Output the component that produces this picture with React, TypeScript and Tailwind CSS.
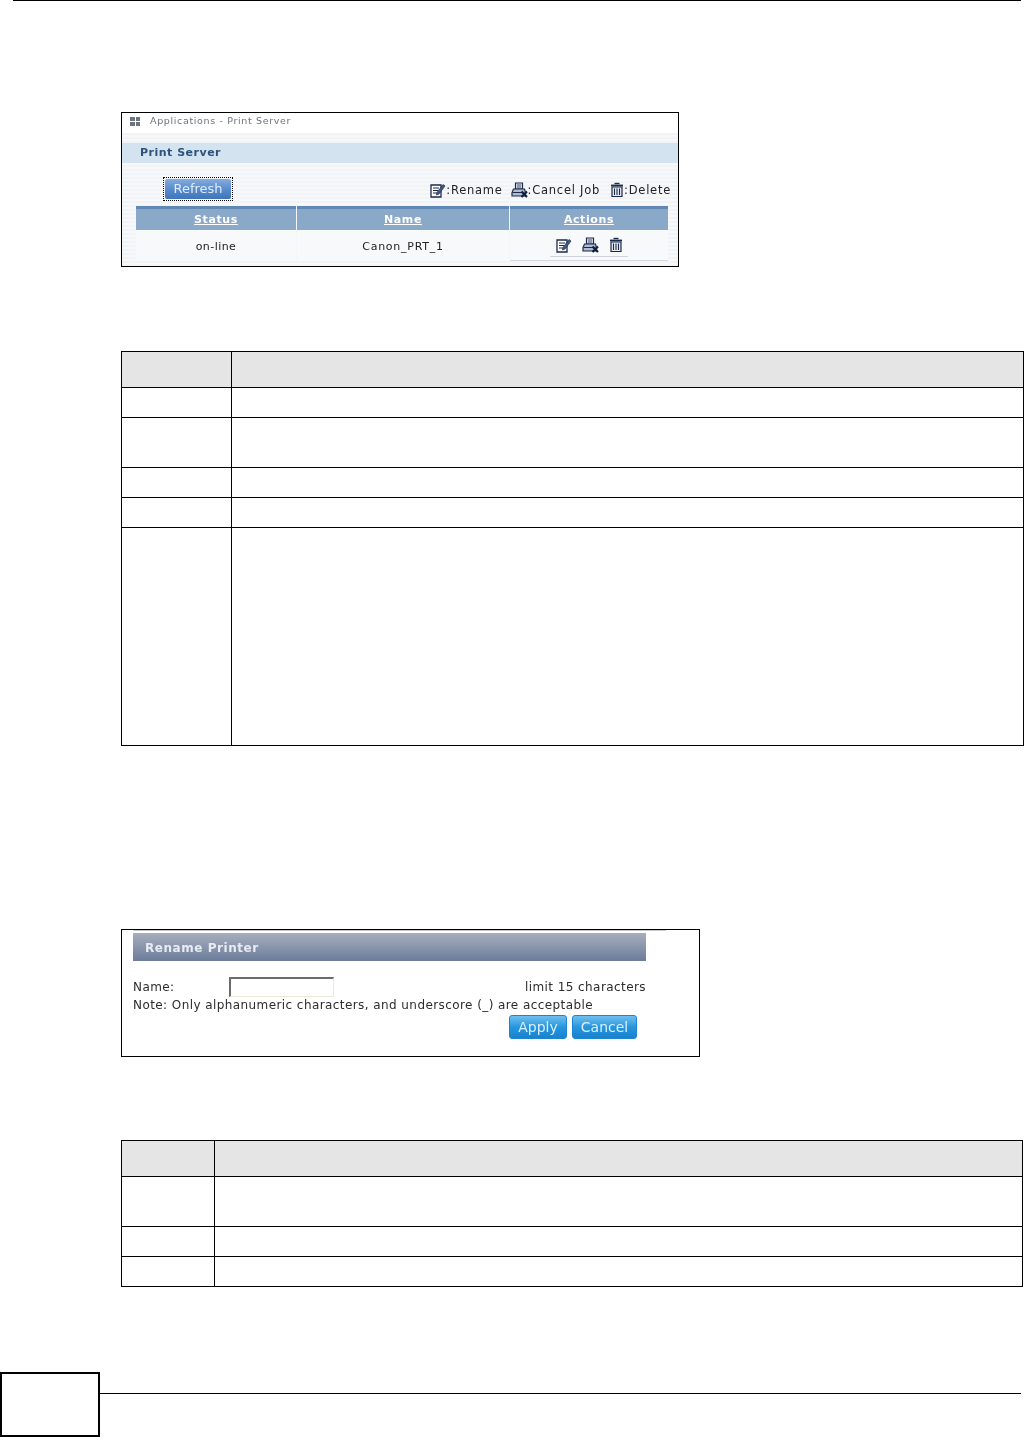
function NoteIcon() {
  return (
    <svg width="16" height="16" viewBox="0 0 16 16" className="shrink-0">
      <path d="M1 3h10v12H1z" fill="#fff" stroke="#1c2a4a" strokeWidth="1.300" />
      <path d="M3 6h6M3 8.500h5M3 11h4" stroke="#1c2a4a" strokeWidth="1.200" />
      <path d="M7 10.500l6-8 2 1.500-6 8-2.500 1z" fill="#3f5a86" stroke="#1c2a4a" strokeWidth="0.700" />
    </svg>
  )
}

function PrinterXIcon() {
  return (
    <svg width="17" height="16" viewBox="0 0 17 16" className="shrink-0">
      <path d="M4.500 1h7v6h-7z" fill="#dfe5ee" stroke="#1c2a4a" strokeWidth="1.200" />
      <path d="M6 3h4M6 5h4" stroke="#1c2a4a" strokeWidth="0.800" />
      <path d="M2.500 7h11l1 3.500v3.500H1v-3.500z" fill="#aebbd0" stroke="#1c2a4a" strokeWidth="1.200" />
      <path d="M1.500 10.500h11" stroke="#1c2a4a" strokeWidth="1" />
      <path d="M10.500 9.500l5.500 5.500M16 9.500l-5.500 5.500" stroke="#0f1f44" strokeWidth="2.200" />
    </svg>
  )
}

function TrashIcon() {
  return (
    <svg width="14" height="16" viewBox="0 0 14 16" className="shrink-0">
      <path d="M4.500 1.500h5" stroke="#1c2a4a" strokeWidth="1.400" />
      <path d="M1 3.500h12" stroke="#1c2a4a" strokeWidth="1.800" />
      <path d="M2 5h10v9.500H2z" fill="#e8ebf0" stroke="#1c2a4a" strokeWidth="1.200" />
      <path d="M4.500 6.500v6.500M7 6.500v6.500M9.500 6.500v6.500" stroke="#1c2a4a" strokeWidth="1.100" />
    </svg>
  )
}

function HeaderCell({ label }: { label: string }) {
  return (
    <div className="h-6 pt-px border-t-[3px] border-[#5f88b4] bg-[#8aa8c8] flex items-center justify-center">
      <span className="text-[11px] font-bold text-white underline tracking-[0.6px]">{label}</span>
    </div>
  )
}

function PrintServerShot() {
  return (
    <div className="w-[558px] h-[155px] border border-black bg-white overflow-hidden">
      <div className="blur-[0.3px] font-['DejaVu_Sans',sans-serif]">
        <div className="h-5 flex items-center pl-2 pb-1 gap-[10px] text-[9.5px] tracking-[0.65px] text-[#6b7480]">
          <span className="grid grid-cols-2 gap-px w-[10px]">
            <i className="h-1 bg-[#6b7480]" />
            <i className="h-1 bg-[#6b7480]" />
            <i className="h-1 bg-[#6b7480]" />
            <i className="h-1 bg-[#6b7480]" />
          </span>
          Applications - Print Server
        </div>
        <div className="h-[134px] bg-[repeating-linear-gradient(0deg,#f2f3f6_0px,#f2f3f6_2px,#f7f8fa_2px,#f7f8fa_4px)]">
          <div className="h-[10px]" />
          <div className="h-[20px] bg-[#d3e3ef] flex items-center pl-[18px] text-[11px] font-bold tracking-[0.5px] text-[#2c5379]">
            Print Server
          </div>
          <div className="h-[43px] flex items-end justify-between pl-[41px] pr-[7px] pb-[5px]">
            <button className="w-[70px] h-[24px] border border-dotted border-black p-px">
              <span className="h-full rounded-[2px] bg-gradient-to-b from-[#86acdc] via-[#5a8ccf] to-[#3f74b8] flex items-center justify-center text-[13px] text-[#dfecfa]">
                Refresh
              </span>
            </button>
            <div className="flex items-center mb-[2px] text-[11.5px] tracking-[0.75px] text-[#222]">
              <NoteIcon />
              <span>:Rename</span>
              <span className="ml-[8px]"><PrinterXIcon /></span>
              <span>:Cancel Job</span>
              <span className="ml-[10px]"><TrashIcon /></span>
              <span>:Delete</span>
            </div>
          </div>
          <div className="ml-[14px] w-[532px] grid grid-cols-[160px_212px_158px] gap-x-px">
            <HeaderCell label="Status" />
            <HeaderCell label="Name" />
            <HeaderCell label="Actions" />
            <div className="h-[31px] pt-[3px] bg-[#f8f9fb] flex items-center justify-center text-[11px] text-[#222] tracking-[0.45px]">on-line</div>
            <div className="h-[31px] pt-[3px] bg-[#f8f9fb] flex items-center justify-center text-[11px] text-[#222] tracking-[0.75px]">Canon_PRT_1</div>
            <div className="h-[31px] bg-[#f8f9fb] flex flex-col items-center border-b border-[#d5d8de]">
              <div className="h-[27px] w-[78px] flex items-center justify-center gap-[10px] border-b border-[#cfd3da] pt-[3px]">
                <NoteIcon />
                <PrinterXIcon />
                <TrashIcon />
              </div>
            </div>
          </div>
        </div>
      </div>
    </div>
  )
}

function RenameShot() {
  return (
    <div className="w-[579px] h-[128px] border border-black bg-white overflow-hidden">
      <div className="blur-[0.3px] font-['DejaVu_Sans',sans-serif] text-[#2c2c2c]">
        <div className="ml-[11px] w-[533px] border-t border-[#c9c9c9]" />
        <div className="ml-[11px] w-[513px] h-[28px] mt-[2px] pt-[2px] bg-gradient-to-b from-[#a7afbe] to-[#6c7c9a] flex items-center pl-[12px] text-[12px] font-bold tracking-[0.55px] text-[#e8ecf2]">
          Rename Printer
        </div>
        <div className="ml-[11px] w-[513px] flex items-center justify-between mt-[16px] text-[12px] tracking-[0.42px] leading-[20px]">
          <div className="flex items-center">
            <span className="w-[96px]">Name:</span>
            <span className="w-[105px] h-[20px] bg-white border border-[#ece9d8] border-t-2 border-l-2 border-t-[#6b6b6b] border-l-[#6b6b6b]" />
          </div>
          <span>limit 15 characters</span>
        </div>
        <div className="ml-[11px] text-[12px] tracking-[0.42px] leading-[14px] mt-[1px]">
          Note: Only alphanumeric characters, and underscore (_) are acceptable
        </div>
        <div className="flex justify-end gap-[5px] w-[515px] mt-[3px]">
          <span className="w-[58px] h-[24px] rounded-[3px] border border-[#1b86cf] bg-gradient-to-b from-[#6cc0f0] via-[#2596de] to-[#1a82cc] flex items-center justify-center text-[14px] text-[#dceffc]">Apply</span>
          <span className="w-[65px] h-[24px] rounded-[3px] border border-[#1b86cf] bg-gradient-to-b from-[#6cc0f0] via-[#2596de] to-[#1a82cc] flex items-center justify-center text-[14px] text-[#dceffc]">Cancel</span>
        </div>
      </div>
    </div>
  )
}

function SpecTable({ labelWidth, width, rows }: { labelWidth: string; width: string; rows: string[] }) {
  return (
    <div className={`${width} border-t border-l border-black`}>
      <div className="flex h-[36px] bg-[#e5e5e5] border-b border-black">
        <div className={`${labelWidth} border-r border-black`} />
        <div className="flex-1 border-r border-black" />
      </div>
      {rows.map((h, i) => (
        <div key={i} className={`flex ${h} border-b border-black`}>
          <div className={`${labelWidth} border-r border-black`} />
          <div className="flex-1 border-r border-black" />
        </div>
      ))}
    </div>
  )
}

export default function App() {
  return (
    <div className="w-[1024px] h-[1437px] bg-white flex flex-col overflow-hidden">
      <div className="ml-[13px] mr-[3px] h-px bg-black" />
      <div className="pl-[121px] flex flex-col flex-1">
        <div className="mt-[111px]">
          <PrintServerShot />
        </div>
        <div className="mt-[84px]">
          <SpecTable
            labelWidth="w-[110px]"
            width="w-[903px]"
            rows={["h-[30px]", "h-[50px]", "h-[30px]", "h-[30px]", "h-[218px]"]}
          />
        </div>
        <div className="mt-[183px]">
          <RenameShot />
        </div>
        <div className="mt-[83px]">
          <SpecTable
            labelWidth="w-[93px]"
            width="w-[902px]"
            rows={["h-[50px]", "h-[30px]", "h-[30px]"]}
          />
        </div>
      </div>
      <div className="flex items-start h-[65px]">
        <div className="w-[100px] h-[65px] border-2 border-black" />
        <div className="mt-[21px] w-[921px] h-px bg-black" />
      </div>
    </div>
  )
}
